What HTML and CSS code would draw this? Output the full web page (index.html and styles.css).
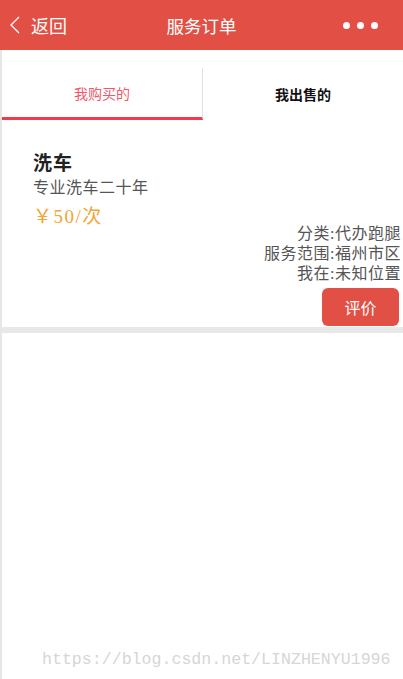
FILE: index.html
```html
<!DOCTYPE html>
<html lang="zh-CN">
<head>
  <meta charset="UTF-8" />
  <meta name="viewport" content="width=device-width, initial-scale=1.0" />
  <title>服务订单</title>
  <link rel="stylesheet" href="styles.css">
</head>
<body>
  <header class="topbar">
    <div class="back">
      <svg class="chevron" width="12" height="20" viewBox="0 0 12 20">
        <path d="M10 2 L2 10 L10 18" fill="none" stroke="#fff" stroke-width="1.3" />
      </svg>
      <span>返回</span>
    </div>
    <div class="title">服务订单</div>
    <div class="more">
      <span class="dot"></span>
      <span class="dot"></span>
      <span class="dot"></span>
    </div>
  </header>

  <div class="page">
    <nav class="tabs">
      <div class="tab active">我购买的</div>
      <div class="tab">我出售的</div>
    </nav>

    <div class="order">
      <div class="order-name">洗车</div>
      <div class="order-desc">专业洗车二十年</div>
      <div class="order-price">￥50/次</div>
      <div class="order-meta">
        <div>分类:代办跑腿</div>
        <div>服务范围:福州市区</div>
        <div>我在:未知位置</div>
      </div>
      <div class="order-actions">
        <button class="rate-btn">评价</button>
      </div>
    </div>
    <div class="divider"></div>

    <div class="watermark">https://blog.csdn.net/LINZHENYU1996</div>
  </div>
</body>
</html>
```

FILE: styles.css
```css
body {
  margin: 0;
  font-family: "Noto Sans CJK SC", "Noto Sans", sans-serif;
  background-color: #fff;
  color: #333;
}

.topbar {
  height: 50px;
  background-color: #e25045;
  color: #fff;
  display: flex;
  align-items: center;
  justify-content: space-between;
  padding: 0 25px 0 9px;
  position: relative;
}

.back {
  display: flex;
  align-items: center;
  gap: 10px;
  font-size: 18px;
}

.title {
  position: absolute;
  left: 0;
  right: 0;
  text-align: center;
  font-size: 17.5px;
  pointer-events: none;
}

.more {
  display: flex;
  gap: 7px;
}

.dot {
  width: 7px;
  height: 7px;
  border-radius: 50%;
  background-color: #fff;
}

.page {
  border-left: 2px solid #e6e6e6;
  min-height: 629px;
  display: flex;
  flex-direction: column;
}

.tabs {
  display: flex;
  margin-top: 18px;
  height: 52px;
}

.tab {
  flex: 1;
  display: flex;
  align-items: center;
  justify-content: center;
  font-size: 14px;
  font-weight: bold;
  color: #111;
}

.tab.active {
  color: #f2566c;
  font-weight: normal;
  border-right: 1px solid #e0e0e0;
  border-bottom: 3px solid #f23a4c;
  box-sizing: border-box;
}

.order {
  padding: 32px 2px 1px 31px;
  font-family: "Liberation Serif", "Noto Sans CJK SC", serif;
}

.order-name {
  font-size: 19px;
  font-weight: bold;
  color: #222;
  line-height: 24px;
  letter-spacing: 1px;
}

.order-desc {
  font-size: 16px;
  color: #555;
  line-height: 24px;
  letter-spacing: 0.5px;
}

.order-price {
  font-size: 19px;
  color: #f3a634;
  line-height: 34px;
  letter-spacing: 1.5px;
}

.order-meta {
  text-align: right;
  font-size: 16px;
  color: #555;
  line-height: 20px;
  margin-top: -10px;
  letter-spacing: 0.5px;
}

.order-actions {
  display: flex;
  justify-content: flex-end;
  margin-top: 4px;
  padding-right: 2px;
}

.rate-btn {
  width: 77px;
  height: 38px;
  border: none;
  border-radius: 6px;
  background-color: #e25045;
  color: #fff;
  font-family: "Noto Sans CJK SC", sans-serif;
  font-size: 16px;
}

.divider {
  height: 6px;
  background-color: #e8e8e8;
}

.watermark {
  margin-top: auto;
  margin-bottom: 10px;
  padding-left: 40px;
  font-family: "Liberation Mono", monospace;
  font-size: 16.6px;
  color: #d6d6d6;
}
```
